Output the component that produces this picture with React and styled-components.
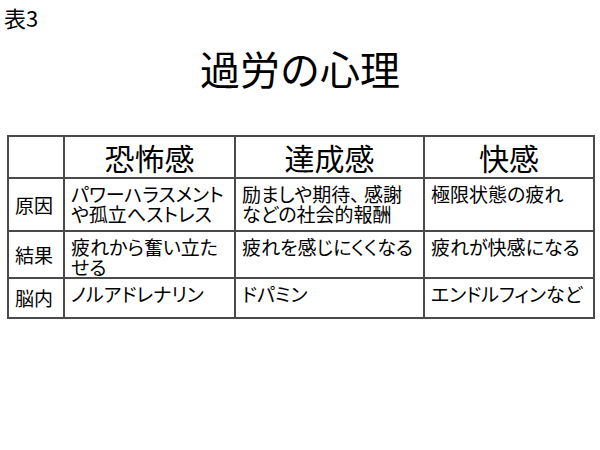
import React from 'react';
import styled, { createGlobalStyle } from 'styled-components';

const GlobalStyle = createGlobalStyle`
  html, body {
    margin: 0;
    padding: 0;
    background: #ffffff;
  }
  body {
    font-family: 'Noto Sans CJK JP', 'Liberation Sans', sans-serif;
    color: #000;
  }
`;

const Slide = styled.div`
  width: 600px;
  height: 450px;
  background: #fff;
  overflow: hidden;
`;

const Label = styled.div`
  padding: 4px 0 0 4px;
  font-size: 22px;
  line-height: 26px;
`;

const Title = styled.h1`
  margin: 15px 0 0 0;
  font-size: 40px;
  line-height: 46px;
  font-weight: normal;
  text-align: center;
`;

const Table = styled.table`
  margin: 44px 0 0 7px;
  width: 586px;
  border-collapse: collapse;
  table-layout: fixed;
`;

const Row = styled.tr`
  height: ${p => p.h}px;
`;

const Cell = styled.td`
  border: 2px solid #4a4a4a;
  padding: ${p => (p.head ? '0' : p.side ? '0 0 0 6px' : '5px 0 0 6px')};
  font-size: ${p => (p.head ? '30px' : '19px')};
  line-height: ${p => (p.head ? '36px' : '20px')};
  text-align: ${p => (p.head ? 'center' : 'left')};
  vertical-align: ${p => (p.head || p.side ? 'middle' : 'top')};
  white-space: nowrap;
  font-feature-settings: ${p => (p.head ? 'normal' : '"palt" 1')};
`;

const cols = [56, 171, 189, 170];

const rows = [
  { label: '原因', h: 53, cells: [['パワーハラスメント', 'や孤立へストレス'], ['励ましや期待、 感謝', 'などの社会的報酬'], ['極限状態の疲れ']] },
  { label: '結果', h: 45, cells: [['疲れから奮い立た', 'せる'], ['疲れを感じにくくなる'], ['疲れが快感になる']] },
  { label: '脳内', h: 40, cells: [['ノルアドレナリン'], ['ドパミン'], ['エンドルフィンなど']] },
];

function Lines({ lines }) {
  return lines.map((l, i) => (
    <React.Fragment key={i}>
      {i > 0 && <br />}
      {l}
    </React.Fragment>
  ));
}

export default function App() {
  return (
    <Slide>
      <GlobalStyle />
      <Label>表3</Label>
      <Title>過労の心理</Title>
      <Table>
        <colgroup>
          {cols.map((w, i) => <col key={i} style={{ width: w }} />)}
        </colgroup>
        <tbody>
          <Row h={42}>
            <Cell head />
            <Cell head>恐怖感</Cell>
            <Cell head>達成感</Cell>
            <Cell head>快感</Cell>
          </Row>
          {rows.map(r => (
            <Row key={r.label} h={r.h}>
              <Cell side>{r.label}</Cell>
              {r.cells.map((c, i) => (
                <Cell key={i}><Lines lines={c} /></Cell>
              ))}
            </Row>
          ))}
        </tbody>
      </Table>
    </Slide>
  );
}
